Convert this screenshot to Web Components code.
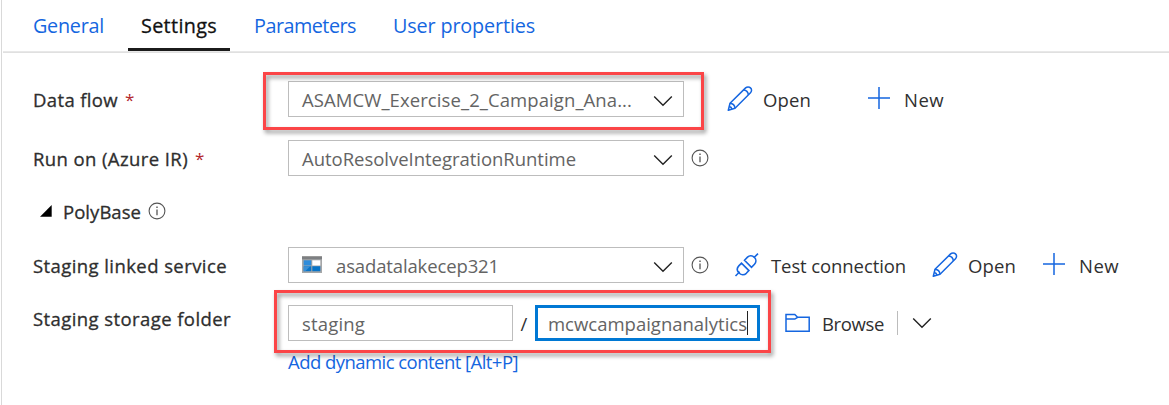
<!DOCTYPE html>
<html lang="en">
<head>
<meta charset="utf-8">
<title>Data flow activity settings</title>
<style>
  html, body { margin: 0; background: #fff; }
  body { width: 1169px; height: 405px; overflow: hidden; font: 18.5px/24px "Open Sans", "Noto Sans", sans-serif; color: #2e2e2e; }
</style>
</head>
<body>
<settings-page></settings-page>
<script>
const define = (name, html, setup) => customElements.define(name, class extends HTMLElement {
  connectedCallback() {
    if (this.shadowRoot) return;
    const template = document.createElement('template');
    template.innerHTML = html;
    this.attachShadow({ mode: 'open' }).append(template.content.cloneNode(true));
    if (setup) setup(this, this.shadowRoot);
  }
});

// A single line of text, tracked to occupy the width given in `w`.
define('fit-text', `<style>
    :host { display: block; flex: none; white-space: nowrap; }
    span { display: block; width: max-content; }
  </style><span><slot></slot></span>`, (el, root) => {
  const w = parseFloat(el.getAttribute('w'));
  const span = root.querySelector('span');
  el.style.width = w + 'px';
  const natural = span.getBoundingClientRect().width;
  span.style.letterSpacing = ((w - natural) / el.textContent.length) + 'px';
});

const icons = {
  chevron: [20, 12, '<path d="M1.2 1.5 10 10.2 18.8 1.5" stroke="#222" stroke-width="1.4"/>'],
  info: [18, 18, '<circle cx="9" cy="9" r="7.9" stroke="#555" stroke-width="1.1"/><path d="M9 7.6v5.6" stroke="#555" stroke-width="1.3"/><path d="M9 4.6v1.5" stroke="#555" stroke-width="1.4"/>'],
  pencil: [26, 26, '<g stroke="#1566e0" stroke-width="1.5" stroke-linejoin="round"><path d="M1.3 24.2 3 17.2 18.6 1.9C20 .5 22.2.6 23.5 1.9c1.4 1.3 1.4 3.4 0 4.8L8 22.2Z"/><path d="M3 17.2c2.6.2 4.7 2.2 5 5M16.4 4.1c2.7.2 4.7 2.1 5 4.8M2.3 20.4c1.3.2 2.4 1.2 2.7 2.7"/></g>'],
  plus: [24, 24, '<path d="M12 1v22M1 12h22" stroke="#1566e0" stroke-width="1.5"/>'],
  plug: [26, 26, '<g stroke="#1566e0" stroke-width="1.6" transform="translate(-1 0)"><path d="m1.5 24 4.2-4.2M19.8 5.8 24 1.6M4.7 20.7c-1.8-2.1-1.8-4.8.1-6.8l2.7-2.8 7.4 7.5-2.6 2.7c-2.1 2-5.2 1.9-7.6-.6ZM10.5 8.2l3-3.1c2-1.9 4.9-1.6 6.8.2 2 2 2.1 4.9.2 6.9l-3 3.1Z"/></g>'],
  folder: [26, 20, '<path d="M1 18.2V1.5h8.8l2.8 2.8H24.2v13.9ZM1 6.1h8.8l2.8-1.8" stroke="#1566e0" stroke-width="1.5"/>'],
  expanded: [12, 12, '<path d="M0 11.7 11.7 0V11.7Z" fill="#000"/>'],
  storage: [20, 17, '<path d="M0 0h20v17H0Z" fill="#a5a7a9"/><path d="M0 0h20v3.3H0Z" fill="#7d7f82"/><path d="M1.7 4.3h7.6v5.2H1.7Z" fill="#2e8cdb"/><path d="M10.3 4.3h8v5.2h-8Z" fill="#fff"/><path d="M1.7 10.3h7.6v5H1.7ZM10.3 10.3h8v5h-8Z" fill="#0874c8"/><path d="M1.7 10.3h6.5l-5 5H1.7Z" fill="#398fd6"/><path d="M0 0h20v1H0Z" fill="#999"/>']
};
define('ui-icon', `<style>:host{display:block;flex:none} svg{display:block;overflow:visible}</style>`, (el, root) => {
  const [w, h, body] = icons[el.getAttribute('name')];
  const holder = document.createElement('template');
  holder.innerHTML = `<svg width="${w}" height="${h}" viewBox="0 0 ${w} ${h}" fill="none">${body}</svg>`;
  root.append(holder.content);
});

define('tab-item', `
  <style>
    :host { display: block; box-sizing: border-box; height: 51px; padding: 12px 13px 0; font-size: 19.8px; line-height: 27px; color: #1566e0; }
    :host([active]) { color: #111; border-bottom: 3px solid #1b1b1b; -webkit-text-stroke: .3px currentColor; }
  </style><slot></slot>`);

define('tab-bar', `
  <style>
    :host { display: flex; box-sizing: border-box; height: 53px; padding-left: 17px; gap: 11px; background: linear-gradient(#ececec, #dcdcdc) 0 51px / 100% 2px no-repeat; }
  </style><slot></slot>`);

define('form-row', `
  <style>
    :host { display: flex; align-items: center; height: 36px; padding-left: 30px; }
    .label { display: flex; align-items: center; flex: none; width: 255px; gap: 7px; padding-top: 2px; -webkit-text-stroke: .3px currentColor; }
    :host([raised]) .label { align-self: flex-start; padding-top: 2px; }
  </style>
  <div class="label"><slot name="label"></slot></div><slot></slot>`);

define('required-mark', `<style>:host{display:block;color:#b3262c;font-size:17px;-webkit-text-stroke:0}</style><fit-text w="9">*</fit-text>`);

define('field-box', `
  <style>
    :host { display: flex; align-items: center; box-sizing: border-box; flex: none; width: 396px; height: 36px; padding: 0 10px 0 13px; border: 1px solid #bdbdbd; color: #646464; }
    :host([focused]) { border: 3px solid #0078d4; padding: 0 0 0 10px; }
    .value { display: flex; align-items: center; flex: 1; gap: 14px; padding-top: 2px; }
    :host([input]) .value { padding-top: 0; height: 24px; align-items: flex-start; overflow: hidden; line-height: 26px; gap: 0; }
    .caret { display: none; width: 1px; height: 24px; background: #222; }
    :host([focused]) .caret { display: block; }
    ::slotted([slot="end"]) { margin-top: 3px; }
  </style>
  <div class="value"><slot></slot><i class="caret"></i></div><slot name="end"></slot>`);

define('command-button', `
  <style>
    :host { display: flex; align-items: center; flex: none; color: #303030; }
    .text { padding-top: 2px; }
  </style><slot name="icon"></slot><div class="text"><slot></slot></div>`);

define('highlight-frame', `
  <style>
    :host { position: absolute; box-sizing: border-box; border: 3px solid #fb4547; filter: drop-shadow(2px 3px 2px rgba(0,0,0,.42)); pointer-events: none; }
  </style>`);

define('settings-page', `
  <style>
    :host { display: block; position: relative; box-sizing: border-box; width: 1169px; height: 405px; padding-left: 3px; background: linear-gradient(#d9d9d9,#d9d9d9) 1px 0 / 1px 100% no-repeat #fff; }
    main { display: flex; flex-direction: column; padding-top: 28px; }
    .run { margin-top: 23px; }
    .group { display: flex; align-items: center; height: 24px; margin: 23px 0 0 37px; }
    .group fit-text { margin: 2px 7px 0 11px; -webkit-text-stroke: .3px currentColor; }
    .linked { margin-top: 24px; }
    .folder { margin-top: 22px; }
    .info { margin: -1px 0 0 7px; }
    .slash { width: 22px; text-align: center; padding-top: 2px; }
    .divider { width: 1px; height: 24px; background: #bcbcbc; margin: 0 14px 0 13px; }
    .link { margin: 9px 0 0 285px; color: #1566e0; }
  </style>
  <tab-bar>
    <tab-item><fit-text w="71">General</fit-text></tab-item>
    <tab-item active><fit-text w="76">Settings</fit-text></tab-item>
    <tab-item><fit-text w="102">Parameters</fit-text></tab-item>
    <tab-item><fit-text w="142">User properties</fit-text></tab-item>
  </tab-bar>
  <main>
    <form-row>
      <fit-text slot="label" w="85">Data flow</fit-text><required-mark slot="label"></required-mark>
      <field-box><fit-text w="330">ASAMCW_Exercise_2_Campaign_Ana...</fit-text><ui-icon slot="end" name="chevron"></ui-icon></field-box>
      <command-button style="margin-left:43px"><ui-icon slot="icon" name="pencil" style="margin-right:10px"></ui-icon><fit-text w="48">Open</fit-text></command-button>
      <command-button style="margin-left:56px"><ui-icon slot="icon" name="plus" style="margin:-2px 13px 0 0"></ui-icon><fit-text w="40">New</fit-text></command-button>
    </form-row>
    <form-row class="run">
      <fit-text slot="label" w="155">Run on (Azure IR)</fit-text><required-mark slot="label"></required-mark>
      <field-box><fit-text w="274">AutoResolveIntegrationRuntime</fit-text><ui-icon slot="end" name="chevron"></ui-icon></field-box>
      <ui-icon class="info" name="info"></ui-icon>
    </form-row>
    <div class="group"><ui-icon name="expanded"></ui-icon><fit-text w="78">PolyBase</fit-text><ui-icon name="info"></ui-icon></div>
    <form-row class="linked">
      <fit-text slot="label" w="194">Staging linked service</fit-text>
      <field-box><ui-icon name="storage" style="margin-top:-4px"></ui-icon><fit-text w="163">asadatalakecep321</fit-text><ui-icon slot="end" name="chevron"></ui-icon></field-box>
      <ui-icon class="info" name="info"></ui-icon>
      <command-button style="margin-left:26px"><ui-icon slot="icon" name="plug" style="margin-right:10px"></ui-icon><fit-text w="135">Test connection</fit-text></command-button>
      <command-button style="margin-left:26px"><ui-icon slot="icon" name="pencil" style="margin-right:10px"></ui-icon><fit-text w="48">Open</fit-text></command-button>
      <command-button style="margin-left:26px"><ui-icon slot="icon" name="plus" style="margin:-2px 13px 0 0"></ui-icon><fit-text w="40">New</fit-text></command-button>
    </form-row>
    <form-row class="folder" raised>
      <fit-text slot="label" w="198">Staging storage folder</fit-text>
      <field-box input style="width:225px"><fit-text w="63">staging</fit-text></field-box>
      <div class="slash">/</div>
      <field-box input focused style="width:225px"><fit-text w="199">mcwcampaignanalytics</fit-text></field-box>
      <command-button style="margin-left:25px"><ui-icon slot="icon" name="folder" style="margin-right:11px"></ui-icon><fit-text w="62">Browse</fit-text></command-button>
      <div class="divider"></div>
      <ui-icon name="chevron"></ui-icon>
    </form-row>
    <div class="link"><fit-text w="230">Add dynamic content [Alt+P]</fit-text></div>
  </main>
  <highlight-frame style="left:263px;top:72px;width:441px;height:58px"></highlight-frame>
  <highlight-frame style="left:274px;top:290px;width:497px;height:63px"></highlight-frame>`);
</script>
</body>
</html>
